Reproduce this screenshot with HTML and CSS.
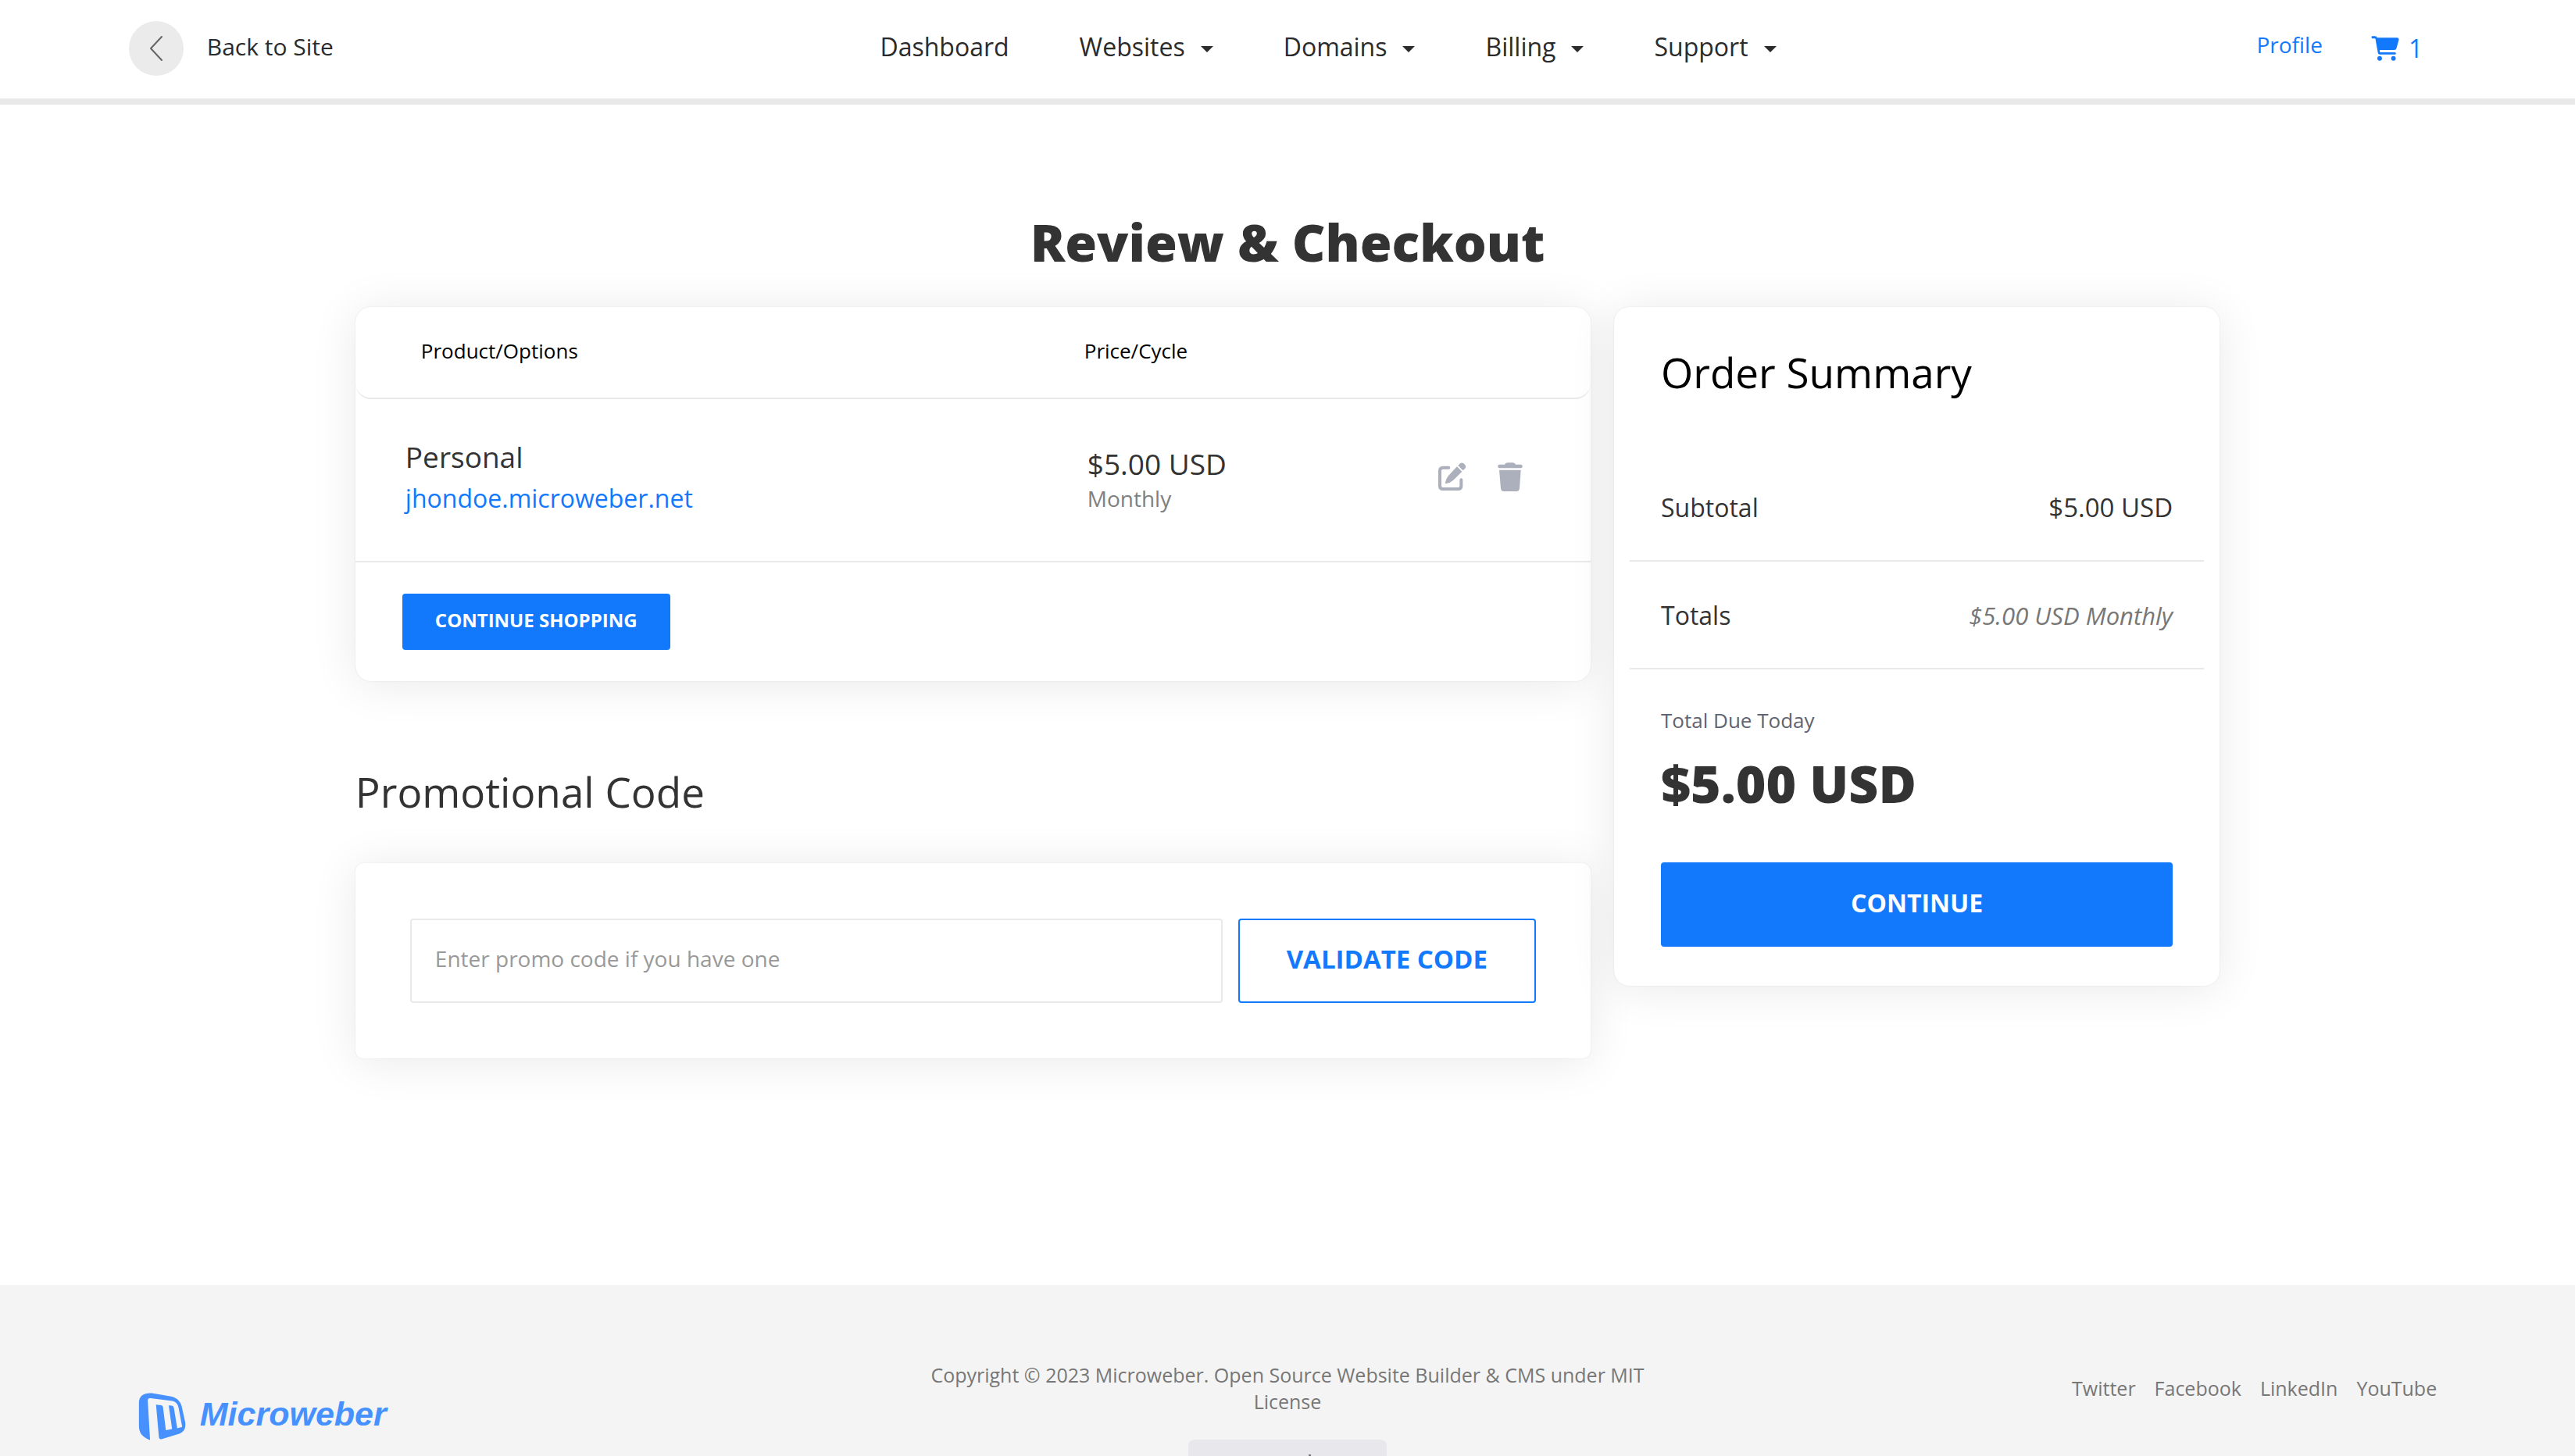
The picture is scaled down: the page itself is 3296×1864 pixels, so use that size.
FILE: index.html
```html
<!DOCTYPE html>
<html lang="en">
<head>
<meta charset="utf-8">
<meta name="viewport" content="width=device-width, initial-scale=1">
<title>Review &amp; Checkout</title>
<link rel="stylesheet" href="styles.css">
</head>
<body>
<header class="site-header">
  <a class="back" href="#">
    <span class="back-circle"><svg width="18" height="34" viewBox="0 0 18 34" aria-hidden="true"><path d="M16 2 2 17 16 32" fill="none" stroke="#666" stroke-width="2" stroke-linecap="round" stroke-linejoin="round"/></svg></span>
    <span class="back-text">Back to Site</span>
  </a>
  <nav class="main-nav">
    <a href="#">Dashboard</a>
    <a class="has-menu" href="#">Websites</a>
    <a class="has-menu" href="#">Domains</a>
    <a class="has-menu" href="#">Billing</a>
    <a class="has-menu" href="#">Support</a>
  </nav>
  <div class="account">
    <a class="profile" href="#">Profile</a>
    <a class="cart" href="#">
      <svg width="36" height="32" viewBox="705 137 109 98" fill="currentColor" aria-hidden="true"><path d="M709 138H720Q727 138 728 144H806Q814 144 813 152L804 185Q802 192 795 192H738L739 201H798Q802 202 802 206Q802 210 798 210H738Q732 210 731 203L721 147H709Q706 146 706 142Q706 138 709 138Z"/><circle cx="738" cy="225" r="9"/><circle cx="792" cy="225" r="9"/></svg>
      <span>1</span>
    </a>
  </div>
</header>

<main class="page">
  <h1>Review &amp; Checkout</h1>
  <div class="columns">
    <div class="left">
      <section class="card">
        <table class="items">
          <thead>
            <tr><th class="col-product">Product/Options</th><th>Price/Cycle</th><th></th></tr>
          </thead>
          <tbody>
            <tr>
              <td class="product"><div class="item-name">Personal</div><a class="item-link" href="#">jhondoe.microweber.net</a></td>
              <td class="price"><div class="item-name">$5.00 USD</div><div class="cycle">Monthly</div></td>
              <td>
                <div class="actions">
                  <button type="button" aria-label="Edit"><svg width="36" height="37" viewBox="65 70 108 111" aria-hidden="true"><path d="M105 90H83Q71 90 71 102V160Q71 172 83 172H141Q153 172 153 160V137" fill="none" stroke="currentColor" stroke-width="12" stroke-linecap="round"/><path fill="currentColor" d="M137 86 156 105 122 139Q112 148 96 151 91 152 92 147 95 132 104 121ZM141 82 149 74Q157 68 165 76 174 84 168 93L160 101Z"/></svg></button>
                  <button type="button" aria-label="Remove"><svg width="32" height="37" viewBox="290 68 96 111" fill="currentColor" aria-hidden="true"><rect x="291" y="76" width="94" height="14" rx="6"/><path d="M316 78Q320 69 328 69H348Q356 69 360 78ZM296 97H379L374 168Q373 179 363 179H313Q303 179 302 168Z"/></svg></button>
                </div>
              </td>
            </tr>
          </tbody>
        </table>
        <div class="card-foot"><button class="btn btn-small" type="button">CONTINUE SHOPPING</button></div>
      </section>
      <h2 class="promo-title"><label for="promo">Promotional Code</label></h2>
      <form class="card promo">
        <input id="promo" type="text" placeholder="Enter promo code if you have one">
        <button class="btn btn-outline" type="button">VALIDATE CODE</button>
      </form>
    </div>
    <aside class="card summary">
      <h2>Order Summary</h2>
      <div class="sum-row"><span>Subtotal</span><span class="amount">$5.00 USD</span></div>
      <div class="sum-row"><span>Totals</span><em>$5.00 USD Monthly</em></div>
      <div class="due">
        <div class="due-label">Total Due Today</div>
        <div class="due-amount">$5.00 USD</div>
        <button class="btn btn-block" type="button">CONTINUE</button>
      </div>
    </aside>
  </div>
</main>

<footer class="site-footer">
  <a class="logo" href="#">
    <svg width="61" height="61" viewBox="112 485 183 184" fill="currentColor" aria-hidden="true"><path d="M157 668C125 655 114 640 114 610V525C114 495 135 484 168 487L238 499C262 504 277 520 281 545L293 600C296 625 285 638 270 643L203 664Q192 667 191 655L180 531 200 533Q206 534 207 541L218 630 242 625 229 534 241 535Q248 537 249 544L262 622 281 617 267 543Q262 520 243 517L158 506Q148 505 148 515Z"/></svg>
    <span class="logo-name">Microweber</span>
  </a>
  <div class="legal">
    <p>Copyright © 2023 Microweber. Open Source Website Builder &amp; CMS under MIT License</p>
    <div class="badge"><span class="badge-mark"></span></div>
  </div>
  <nav class="social">
    <a href="#">Twitter</a>
    <a href="#">Facebook</a>
    <a href="#">LinkedIn</a>
    <a href="#">YouTube</a>
  </nav>
</footer>
</body>
</html>
```
FILE: styles.css
```css
* { box-sizing: border-box; }

body {
  margin: 0;
  height: 100vh;
  overflow: hidden;
  background: #fff;
  color: #333;
  font-family: "Open Sans", "Noto Sans", sans-serif;
  font-size: 32px;
  line-height: 48px;
}

a { color: inherit; text-decoration: none; }
h1, h2, p { margin: 0; font-weight: 400; }
button { font: inherit; color: inherit; cursor: pointer; }
svg { display: block; }

/* Header */
.site-header {
  display: grid;
  grid-template-columns: 1fr auto 1fr;
  align-items: center;
  padding: 27px 5% 29px;
  border-bottom: 8px solid #e9e9e9;
  color: #2b2b2b;
}
.back { display: flex; align-items: center; gap: 30px; }
.back-circle {
  display: flex;
  align-items: center;
  justify-content: center;
  width: 70px;
  height: 70px;
  border-radius: 50%;
  background: #ebebeb;
}
.back-text { padding-bottom: 4px; font-size: 30px; }
.main-nav { display: flex; gap: 90px; padding: 0 0 4px 104px; }
.has-menu { display: flex; align-items: center; gap: 20px; }
.has-menu::after {
  content: "";
  margin-top: 6px;
  border: 8px solid transparent;
  border-top-color: currentColor;
  border-bottom: 0;
}
.account { display: flex; align-items: center; justify-content: flex-end; gap: 62px; padding-right: 30px; color: #1279fc; }
.profile { padding-bottom: 10px; font-size: 28px; }
.cart { display: flex; align-items: center; gap: 12px; }

/* Page */
.page { width: 72.4%; margin: 0 auto; padding: 135px 0 290px; }
h1 { margin-bottom: 44px; font-size: 66px; font-weight: 800; line-height: 80px; text-align: center; }
.columns { display: grid; grid-template-columns: 51fr 25fr; gap: 30px; align-items: start; }
.card { border-radius: 20px; background: #fff; box-shadow: 0 0 2px rgba(0, 0, 0, .1), 0 4px 60px rgba(0, 0, 0, .09); }

.items { width: 100%; border-spacing: 0; table-layout: fixed; }
.items th {
  height: 118px;
  padding: 0 0 4px;
  border-bottom: 2px solid #e9e9e9;
  color: #000;
  font-size: 26px;
  font-weight: 400;
  text-align: left;
}
.items th:first-child { border-bottom-left-radius: 20px; padding-left: 84px; }
.items th:last-child { border-bottom-right-radius: 20px; }
.items .col-product { width: 59%; }
.items td { height: 209px; padding: 0 0 8px; border-bottom: 2px solid #e9e9e9; }
.items .product { padding-left: 64px; }
.items .price { padding-left: 4px; }
.item-name { font-size: 37px; line-height: 54px; }
.item-link { display: block; color: #1279fc; line-height: 52px; }
.cycle { color: #808080; font-size: 28px; line-height: 34px; }
.actions { display: flex; justify-content: flex-end; gap: 40px; padding-right: 87px; color: #acafbc; }
.actions button { padding: 0; border: 0; background: none; }
.card-foot { padding: 40px 60px; }

.btn { display: block; border: 0; border-radius: 4px; background: #1279fc; color: #fff; font-weight: 700; }
.btn-small { height: 72px; padding: 0 42px 4px; font-size: 24px; }
.btn-outline { padding: 0 60px 4px; border: 2px solid #1279fc; background: #fff; color: #1279fc; font-size: 33px; }
.btn-block { width: 100%; height: 108px; padding: 0 0 4px; }

.promo-title { margin: 112px 0 61px; font-size: 53px; line-height: 60px; }
.promo { display: flex; gap: 20px; padding: 71px 70px; border-radius: 10px; }
.promo input {
  flex: 1;
  min-width: 0;
  height: 108px;
  padding: 0 30px 6px;
  border: 2px solid #e9e9e9;
  border-radius: 4px;
  font: inherit;
  font-size: 28px;
}
.promo input::placeholder { color: #999; }

.summary { padding: 54px 20px 50px; }
.summary h2 { margin-bottom: 74px; padding: 0 40px; color: #000; font-size: 53px; line-height: 60px; }
.sum-row { display: flex; justify-content: space-between; padding: 45px 40px 43px; border-bottom: 2px solid #e9e9e9; }
.amount { font-size: 33px; }
.sum-row em { color: #777; font-size: 31px; }
.due { padding: 47px 40px 0; }
.due-label { margin-bottom: 22px; color: #5f6470; font-size: 26px; line-height: 36px; }
.due-amount { margin-bottom: 62px; font-size: 66px; font-weight: 800; line-height: 80px; }

/* Footer */
.site-footer {
  display: grid;
  grid-template-columns: 1fr 32% 1fr;
  align-items: start;
  padding: 98px calc(5% + 12px) 60px;
  background: #f4f4f4;
  color: #777;
  font-size: 25px;
  line-height: 34px;
}
.logo {
  display: flex;
  align-items: center;
  gap: 18px;
  padding-top: 40px;
  color: #4791ff;
  font: italic 700 43px/52px "Liberation Sans", Arial, sans-serif;
}
.logo-name { padding-bottom: 8px; }
.legal { text-align: center; }
.badge { width: 254px; height: 60px; margin: 32px auto 0; padding: 19px 0 0 154px; border-radius: 8px; background: #e8e7ec; }
.badge-mark { display: block; width: 3px; height: 20px; background: #777; }
.social { display: flex; justify-content: flex-end; gap: 24px; padding-top: 17px; }
```
